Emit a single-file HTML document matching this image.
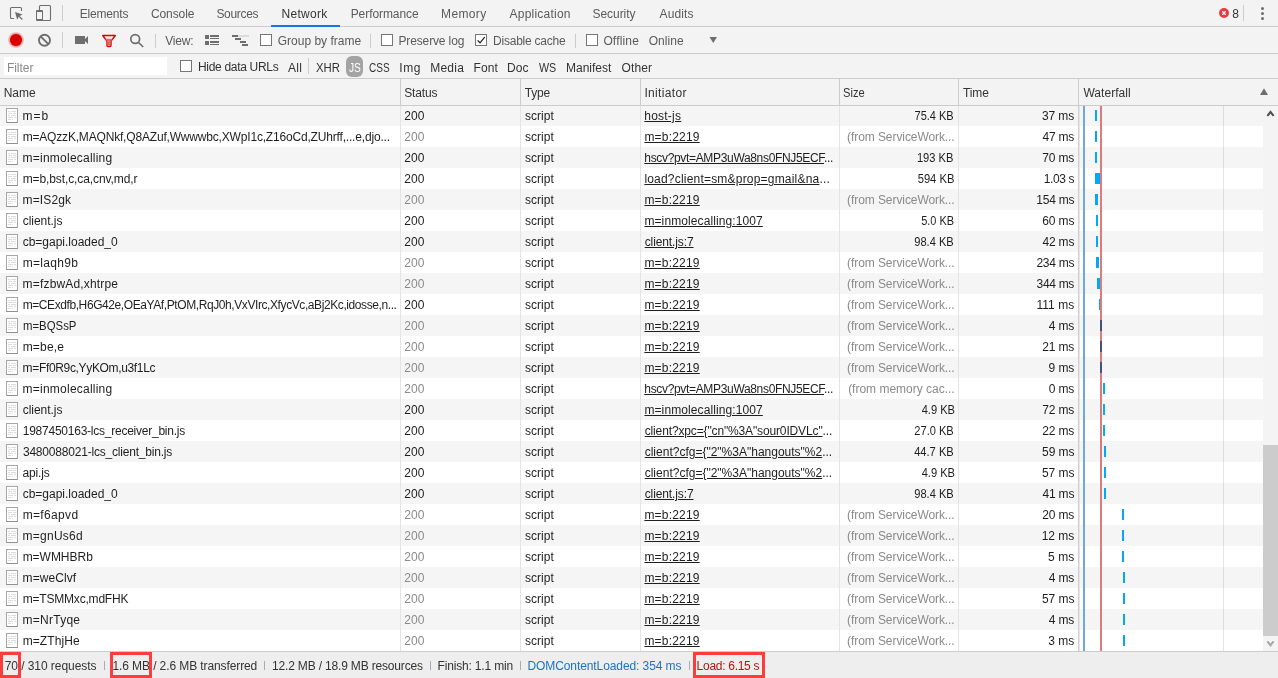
<!DOCTYPE html>
<html><head><meta charset="utf-8"><title>DevTools - Network</title>
<style>
*{box-sizing:border-box;margin:0;padding:0}
html,body{width:1278px;height:678px;overflow:hidden;background:#f3f3f3}
#tabs,#tb,#fb,#hd,#sb,#grid{will-change:transform}
body{font-family:"Liberation Sans",sans-serif;font-size:12px;color:#303942;position:relative}
.abs{position:absolute}
.tx{position:absolute;white-space:nowrap;line-height:14px}
#tabs{position:absolute;left:0;top:0;width:1278px;height:27px;background:#f3f3f3;border-bottom:1px solid #ccc}
#tabs .tx{top:7px;color:#5a5a5a}
#tabs .tx.sel{color:#333}
#tb{position:absolute;left:0;top:27px;width:1278px;height:27px;background:#f3f3f3;border-bottom:1px solid #ccc}
#tb .tx{top:7px;color:#5a5a5a}
#fb{position:absolute;left:0;top:54px;width:1278px;height:25px;background:#f3f3f3;border-bottom:1px solid #ccc}
#fb .tx{top:7px;color:#333}
.sep{position:absolute;width:1px;background:#ccc}
.cb{position:absolute;width:12px;height:12px;border:1px solid #767676;background:#fff}
#hd{position:absolute;left:0;top:79px;width:1278px;height:27px;background:#f3f3f3;border-bottom:1px solid #ccc}
#hd .tx{top:7px;color:#333}
#grid{position:absolute;left:0;top:105px;width:1263px;height:546px;background:#fff;overflow:hidden}
.r{position:relative;height:21px;width:1263px;background:#fff}
.r.o{background:#f5f5f5}
.c{position:absolute;top:1px;height:21px;line-height:21px;white-space:nowrap;color:#1e1e1e}
.c.g{color:#8a8a8a}
.in u{text-decoration:underline;text-underline-offset:1px}
.ic{position:absolute;left:6px;top:3px;width:12px;height:15px;border:1px solid #a6a6a6;border-bottom-color:#919191;background:#fff}
.ic:after{content:"";position:absolute;left:1px;top:2px;width:8px;height:9px;
background:linear-gradient(#fff,#fff) 2px 0/1px 1px no-repeat,linear-gradient(#fff,#fff) 4px 2px/1px 1px no-repeat,linear-gradient(#fff,#fff) 2px 4px/1px 1px no-repeat,linear-gradient(#fff,#fff) 5px 6px/1px 1px no-repeat,linear-gradient(#fff,#fff) 3px 8px/1px 1px no-repeat,linear-gradient(#fff,#fff) 5px 8px/3px 1px no-repeat,repeating-linear-gradient(#dcdcdc 0,#dcdcdc 1px,#fff 1px,#fff 2px)}
.bar{position:absolute;top:5px;height:11px;background:#03a9f4}
.bar.dk{background:#47507e;z-index:3}
.vl{position:absolute;width:1px;background:#ccc}
.vl.d{background:#e4e4e4}
#sb{position:absolute;left:0;top:651px;width:1278px;height:27px;background:#eee;border-top:1px solid #ccc}
#sb .tx{top:7px;color:#333}
.rb{position:absolute;top:652px;height:26px;border:3px solid #fc3d3d}
.ss{position:absolute;top:9px;width:1px;height:9px;background:#aaaab6}
</style></head><body>
<div id="tabs">
<span class="tx" style="letter-spacing:-0.18px;left:79.68px;">Elements</span>
<span class="tx" style="letter-spacing:-0.09px;left:150.95px;">Console</span>
<span class="tx" style="letter-spacing:-0.33px;left:216.44px;">Sources</span>
<span class="tx sel" style="letter-spacing:0.28px;left:281.59px;">Network</span>
<span class="tx" style="letter-spacing:-0.07px;left:350.68px;">Performance</span>
<span class="tx" style="letter-spacing:0.36px;left:441.05px;">Memory</span>
<span class="tx" style="letter-spacing:0.22px;left:509.58px;">Application</span>
<span class="tx" style="letter-spacing:-0.04px;left:592.44px;">Security</span>
<span class="tx" style="letter-spacing:0.12px;left:659.59px;">Audits</span>
<span class="tx" style="letter-spacing:3.08px;left:1232.35px;color:#333">8</span>
<div class="abs" style="left:271px;top:25px;width:69px;height:2px;background:#1a73e8"></div>
<div class="sep" style="left:62px;top:5px;height:16px"></div>
<div class="sep" style="left:1243px;top:5px;height:16px"></div>
<svg class="abs" style="left:0;top:0" width="70" height="27" viewBox="0 0 70 27">
<path d="M14 18.5H11.5a1 1 0 0 1-1-1V8.500a1 1 0 0 1 1-1H20.500a1 1 0 0 1 1 1V11" fill="none" stroke="#6e6e6e" stroke-width="1.1"/>
<path d="M15 12l7.600 2.400-3 1.500 3.200 3.200-.9.900-3.200-3.200-1.500 3z" fill="#6e6e6e"/>
<rect x="39.500" y="5.500" width="11" height="15" rx="1" fill="none" stroke="#6e6e6e" stroke-width="1.100"/>
<rect x="36" y="10" width="7" height="11" rx="1" fill="#6e6e6e"/>
<rect x="37" y="12" width="5" height="7" fill="#f3f3f3"/>
</svg>
<svg class="abs" style="left:1215px;top:4px" width="60" height="20" viewBox="0 0 60 20">
<circle cx="9" cy="9" r="5" fill="#eb3941"/>
<path d="M7.300 7.300l3.400 3.400M10.700 7.300l-3.400 3.400" stroke="#fff" stroke-width="1.300"/>
<circle cx="47.500" cy="4.500" r="1.500" fill="#6e6e6e"/><circle cx="47.500" cy="9.500" r="1.500" fill="#6e6e6e"/><circle cx="47.500" cy="14.500" r="1.500" fill="#6e6e6e"/>
</svg>
</div>
<div id="tb">
<svg class="abs" style="left:0;top:0" width="260" height="27" viewBox="0 0 260 27">
<defs><radialGradient id="rg"><stop offset="0.700" stop-color="#d80000" stop-opacity="0.450"/><stop offset="1" stop-color="#d80000" stop-opacity="0"/></radialGradient></defs>
<circle cx="16" cy="13" r="8.500" fill="url(#rg)"/>
<circle cx="16" cy="13" r="6" fill="#d80000"/>
<circle cx="44.500" cy="13.300" r="5.500" fill="none" stroke="#6e6e6e" stroke-width="1.900"/>
<path d="M40.600 9.400l7.800 7.800" stroke="#6e6e6e" stroke-width="1.900"/>
<path d="M75 9h10v3l3-3v8l-3-3v3H75z" fill="#6e6e6e"/>
<path d="M102.700 8.500h12.600l-4.300 5.700v4.300a1 1 0 0 1-1 1h-2a1 1 0 0 1-1-1v-4.300z" fill="none" stroke="#d80000" stroke-width="1.400" stroke-linejoin="round"/>
<path d="M105.200 11.800h7.600l-2.500 3.200v3.500h-2.600v-3.500z" fill="#e46a6a"/>
<circle cx="135.200" cy="12" r="4.400" fill="none" stroke="#6e6e6e" stroke-width="1.700"/>
<path d="M138.500 15.500l4.700 4.500" stroke="#6e6e6e" stroke-width="1.700"/>
<g fill="#6e6e6e">
<rect x="205" y="8" width="4" height="4"/><rect x="205" y="14" width="4" height="4"/>
<rect x="210" y="8" width="9" height="2"/><rect x="210" y="11" width="9" height="1"/>
<rect x="210" y="14" width="9" height="2"/><rect x="210" y="17" width="9" height="1"/>
<rect x="232" y="8" width="6" height="2"/><rect x="235" y="11" width="6" height="2"/>
<rect x="240" y="14" width="6" height="2"/><rect x="242" y="17" width="6" height="2"/>
</g>
<rect x="238" y="8" width="11" height="2" fill="#dcdcdc"/>
</svg>
<div class="sep" style="left:62px;top:5px;height:16px"></div>
<div class="sep" style="left:155px;top:7px;height:14px"></div>
<div class="sep" style="left:370px;top:7px;height:14px"></div>
<div class="sep" style="left:575px;top:7px;height:14px"></div>
<span class="tx" style="letter-spacing:-0.19px;left:165.17px;">View:</span>
<div class="cb" style="left:260px;top:7px"></div>
<span class="tx" style="left:277.72px;">Group by frame</span>
<div class="cb" style="left:381px;top:7px"></div>
<span class="tx" style="letter-spacing:-0.13px;left:398.45px;">Preserve log</span>
<div class="cb" style="left:475px;top:7px"><svg class="abs" style="left:0;top:0" width="10" height="10" viewBox="0 0 10 10"><path d="M1.600 5.400l2.400 2.400 4.700-5.600" fill="none" stroke="#222" stroke-width="1.300"/></svg></div>
<span class="tx" style="letter-spacing:-0.23px;left:493.05px;">Disable cache</span>
<div class="cb" style="left:586px;top:7px"></div>
<span class="tx" style="letter-spacing:0.16px;left:603.39px;">Offline</span>
<span class="tx" style="letter-spacing:0.07px;left:648.65px;">Online</span>
<svg class="abs" style="left:708px;top:9px" width="10" height="8" viewBox="0 0 10 8"><path d="M1.500 1h7.500l-3.750 6z" fill="#6e6e6e"/></svg>
</div>
<div id="fb">
<div class="abs" style="left:4px;top:3px;width:163px;height:18px;background:#fff"></div>
<span class="tx" style="letter-spacing:-0.04px;left:6.94px;color:#8a8a8a">Filter</span>
<div class="cb" style="left:180px;top:6px"></div>
<span class="tx" style="letter-spacing:-0.31px;left:198.02px;top:6px">Hide data URLs</span>
<span class="tx" style="letter-spacing:0.3px;left:287.92px;">All</span>
<div class="sep" style="left:308px;top:4px;height:16px"></div>
<span class="tx" style="transform:scaleX(0.9456);transform-origin:0 50%;left:316.34px;">XHR</span>
<div class="abs pill" style="left:346px;top:2px;width:17px;height:21px;border-radius:6px;background:#a3a3a3"></div>
<span class="tx js" style="transform:scaleX(0.8474);transform-origin:0 50%;left:348.96px;color:#fff">JS</span>
<span class="tx" style="transform:scaleX(0.8343);transform-origin:0 50%;left:369.46px;">CSS</span>
<span class="tx" style="letter-spacing:0.51px;left:399.34px;">Img</span>
<span class="tx" style="letter-spacing:0.23px;left:430.23px;">Media</span>
<span class="tx" style="letter-spacing:0.07px;left:473.59px;">Font</span>
<span class="tx" style="letter-spacing:0.06px;left:507.02px;">Doc</span>
<span class="tx" style="transform:scaleX(0.8890);transform-origin:0 50%;left:538.89px;">WS</span>
<span class="tx" style="letter-spacing:-0.02px;left:566.02px;">Manifest</span>
<span class="tx" style="letter-spacing:0.13px;left:621.56px;">Other</span>
</div>
<div id="hd">
<span class="tx" style="letter-spacing:-0.01px;left:3.68px;">Name</span>
<span class="tx" style="letter-spacing:-0.13px;left:404.23px;">Status</span>
<span class="tx" style="letter-spacing:-0.24px;left:524.85px;">Type</span>
<span class="tx" style="letter-spacing:0.34px;left:644.38px;">Initiator</span>
<span class="tx" style="transform:scaleX(0.9265);transform-origin:0 50%;left:843.48px;">Size</span>
<span class="tx" style="letter-spacing:-0.1px;left:962.94px;">Time</span>
<span class="tx" style="letter-spacing:0.04px;left:1083.41px;">Waterfall</span>
<svg class="abs" style="left:1259px;top:8px" width="10" height="9" viewBox="0 0 10 9"><path d="M1 7.900h8l-4-6.700z" fill="#6e6e6e"/></svg>
</div>
<div id="grid">
<div class="r o"><i class="ic"></i><span class="c n" style="letter-spacing:0.95px;left:22.62px;">m=b</span><span class="c s" style="letter-spacing:0.04px;left:404.34px;">200</span><span class="c t" style="letter-spacing:0.04px;left:524.93px;">script</span><span class="c in" style="letter-spacing:0.22px;left:644.32px;"><u>host-js</u></span><span class="c sz" style="transform:scaleX(0.9169);transform-origin:100% 50%;right:308.92px;">75.4 KB</span><span class="c tm" style="letter-spacing:-0.09px;right:188.86px;">37 ms</span><b class="bar" style="left:1095px;width:2px"></b></div>
<div class="r"><i class="ic"></i><span class="c n" style="letter-spacing:-0.18px;left:22.64px;">m=AQzzK,MAQNkf,Q8AZuf,Wwwwbc,XWpI1c,Z16oCd,ZUhrff,...e,djo...</span><span class="c s g" style="letter-spacing:0.04px;left:404.34px;">200</span><span class="c t" style="letter-spacing:0.04px;left:524.93px;">script</span><span class="c in" style="letter-spacing:0.2px;left:644.41px;"><u>m=b:2219</u></span><span class="c sz g" style="letter-spacing:-0.08px;right:308.39px;">(from ServiceWork...</span><span class="c tm" style="letter-spacing:-0.21px;right:188.85px;">47 ms</span><b class="bar" style="left:1095px;width:2px"></b></div>
<div class="r o"><i class="ic"></i><span class="c n" style="letter-spacing:0.23px;left:22.62px;">m=inmolecalling</span><span class="c s" style="letter-spacing:0.04px;left:404.34px;">200</span><span class="c t" style="letter-spacing:0.04px;left:524.93px;">script</span><span class="c in" style="letter-spacing:-0.33px;left:644.29px;"><u>hscv?pvt=AMP3uWa8ns0FNJ5ECF</u>...</span><span class="c sz" style="transform:scaleX(0.9269);transform-origin:100% 50%;right:309.21px;">193 KB</span><span class="c tm" style="letter-spacing:-0.13px;right:188.8px;">70 ms</span><b class="bar" style="left:1095px;width:2px"></b></div>
<div class="r"><i class="ic"></i><span class="c n" style="letter-spacing:-0.1px;left:22.64px;">m=b,bst,c,ca,cnv,md,r</span><span class="c s" style="letter-spacing:0.04px;left:404.34px;">200</span><span class="c t" style="letter-spacing:0.04px;left:524.93px;">script</span><span class="c in" style="letter-spacing:0.2px;left:644.39px;"><u>load?client=sm&amp;prop=gmail&amp;na</u>...</span><span class="c sz" style="transform:scaleX(0.9322);transform-origin:100% 50%;right:308.64px;">594 KB</span><span class="c tm" style="letter-spacing:-0.43px;right:189.03px;">1.03 s</span><b class="bar" style="left:1095px;width:5px"></b></div>
<div class="r o"><i class="ic"></i><span class="c n" style="letter-spacing:0.13px;left:22.62px;">m=IS2gk</span><span class="c s g" style="letter-spacing:0.04px;left:404.34px;">200</span><span class="c t" style="letter-spacing:0.04px;left:524.93px;">script</span><span class="c in" style="letter-spacing:0.2px;left:644.41px;"><u>m=b:2219</u></span><span class="c sz g" style="letter-spacing:-0.08px;right:308.39px;">(from ServiceWork...</span><span class="c tm" style="letter-spacing:-0.24px;right:188.81px;">154 ms</span><b class="bar" style="left:1095px;width:3px"></b></div>
<div class="r"><i class="ic"></i><span class="c n" style="letter-spacing:-0.04px;left:22.71px;">client.js</span><span class="c s" style="letter-spacing:0.04px;left:404.34px;">200</span><span class="c t" style="letter-spacing:0.04px;left:524.93px;">script</span><span class="c in" style="letter-spacing:0.1px;left:644.41px;"><u>m=inmolecalling:1007</u></span><span class="c sz" style="transform:scaleX(0.9097);transform-origin:100% 50%;right:309.05px;">5.0 KB</span><span class="c tm" style="letter-spacing:-0.12px;right:188.67px;">60 ms</span><b class="bar" style="left:1096px;width:2px"></b></div>
<div class="r o"><i class="ic"></i><span class="c n" style="letter-spacing:-0.01px;left:22.71px;">cb=gapi.loaded_0</span><span class="c s" style="letter-spacing:0.04px;left:404.34px;">200</span><span class="c t" style="letter-spacing:0.04px;left:524.93px;">script</span><span class="c in" style="letter-spacing:-0.11px;left:644.71px;"><u>client.js:7</u></span><span class="c sz" style="transform:scaleX(0.9237);transform-origin:100% 50%;right:309.09px;">98.4 KB</span><span class="c tm" style="letter-spacing:-0.2px;right:188.81px;">42 ms</span><b class="bar" style="left:1096px;width:2px"></b></div>
<div class="r"><i class="ic"></i><span class="c n" style="letter-spacing:0.34px;left:22.64px;">m=laqh9b</span><span class="c s g" style="letter-spacing:0.04px;left:404.34px;">200</span><span class="c t" style="letter-spacing:0.04px;left:524.93px;">script</span><span class="c in" style="letter-spacing:0.2px;left:644.41px;"><u>m=b:2219</u></span><span class="c sz g" style="letter-spacing:-0.08px;right:308.39px;">(from ServiceWork...</span><span class="c tm" style="letter-spacing:-0.27px;right:188.85px;">234 ms</span><b class="bar" style="left:1096px;width:3px"></b></div>
<div class="r o"><i class="ic"></i><span class="c n" style="letter-spacing:0.17px;left:22.62px;">m=fzbwAd,xhtrpe</span><span class="c s g" style="letter-spacing:0.04px;left:404.34px;">200</span><span class="c t" style="letter-spacing:0.04px;left:524.93px;">script</span><span class="c in" style="letter-spacing:0.2px;left:644.41px;"><u>m=b:2219</u></span><span class="c sz g" style="letter-spacing:-0.08px;right:308.39px;">(from ServiceWork...</span><span class="c tm" style="letter-spacing:-0.33px;right:189.04px;">344 ms</span><b class="bar" style="left:1097px;width:3px"></b></div>
<div class="r"><i class="ic"></i><span class="c n" style="letter-spacing:-0.41px;left:22.64px;">m=CExdfb,H6G42e,OEaYAf,PtOM,RqJ0h,VxVIrc,XfycVc,aBj2Kc,idosse,n...</span><span class="c s" style="letter-spacing:0.04px;left:404.34px;">200</span><span class="c t" style="letter-spacing:0.04px;left:524.93px;">script</span><span class="c in" style="letter-spacing:0.2px;left:644.41px;"><u>m=b:2219</u></span><span class="c sz g" style="letter-spacing:-0.08px;right:308.39px;">(from ServiceWork...</span><span class="c tm" style="letter-spacing:0.07px;right:188.63px;">111 ms</span><b class="bar" style="left:1099px;width:1px"></b></div>
<div class="r o"><i class="ic"></i><span class="c n" style="transform:scaleX(0.9483);transform-origin:0 50%;left:22.64px;">m=BQSsP</span><span class="c s g" style="letter-spacing:0.04px;left:404.34px;">200</span><span class="c t" style="letter-spacing:0.04px;left:524.93px;">script</span><span class="c in" style="letter-spacing:0.2px;left:644.41px;"><u>m=b:2219</u></span><span class="c sz g" style="letter-spacing:-0.08px;right:308.39px;">(from ServiceWork...</span><span class="c tm" style="letter-spacing:-0.16px;right:188.8px;">4 ms</span><b class="bar dk" style="left:1100px;width:2px"></b></div>
<div class="r"><i class="ic"></i><span class="c n" style="letter-spacing:0.2px;left:22.64px;">m=be,e</span><span class="c s g" style="letter-spacing:0.04px;left:404.34px;">200</span><span class="c t" style="letter-spacing:0.04px;left:524.93px;">script</span><span class="c in" style="letter-spacing:0.2px;left:644.41px;"><u>m=b:2219</u></span><span class="c sz g" style="letter-spacing:-0.08px;right:308.39px;">(from ServiceWork...</span><span class="c tm" style="letter-spacing:-0.15px;right:188.85px;">21 ms</span><b class="bar dk" style="left:1100px;width:2px"></b></div>
<div class="r o"><i class="ic"></i><span class="c n" style="letter-spacing:-0.34px;left:22.62px;">m=Ff0R9c,YyKOm,u3f1Lc</span><span class="c s g" style="letter-spacing:0.04px;left:404.34px;">200</span><span class="c t" style="letter-spacing:0.04px;left:524.93px;">script</span><span class="c in" style="letter-spacing:0.2px;left:644.41px;"><u>m=b:2219</u></span><span class="c sz g" style="letter-spacing:-0.08px;right:308.39px;">(from ServiceWork...</span><span class="c tm" style="letter-spacing:-0.04px;right:188.7px;">9 ms</span><b class="bar dk" style="left:1100px;width:2px"></b></div>
<div class="r"><i class="ic"></i><span class="c n" style="letter-spacing:0.23px;left:22.62px;">m=inmolecalling</span><span class="c s g" style="letter-spacing:0.04px;left:404.34px;">200</span><span class="c t" style="letter-spacing:0.04px;left:524.93px;">script</span><span class="c in" style="letter-spacing:-0.33px;left:644.29px;"><u>hscv?pvt=AMP3uWa8ns0FNJ5ECF</u>...</span><span class="c sz g" style="letter-spacing:-0.01px;right:308.39px;">(from memory cac...</span><span class="c tm" style="letter-spacing:-0.12px;right:188.78px;">0 ms</span><b class="bar" style="left:1103px;width:2px"></b></div>
<div class="r o"><i class="ic"></i><span class="c n" style="letter-spacing:-0.04px;left:22.71px;">client.js</span><span class="c s" style="letter-spacing:0.04px;left:404.34px;">200</span><span class="c t" style="letter-spacing:0.04px;left:524.93px;">script</span><span class="c in" style="letter-spacing:0.1px;left:644.41px;"><u>m=inmolecalling:1007</u></span><span class="c sz" style="transform:scaleX(0.9268);transform-origin:100% 50%;right:308.24px;">4.9 KB</span><span class="c tm" style="letter-spacing:-0.13px;right:188.8px;">72 ms</span><b class="bar" style="left:1103px;width:2px"></b></div>
<div class="r"><i class="ic"></i><span class="c n" style="letter-spacing:-0.24px;left:22.75px;">1987450163-lcs_receiver_bin.js</span><span class="c s" style="letter-spacing:0.04px;left:404.34px;">200</span><span class="c t" style="letter-spacing:0.04px;left:524.93px;">script</span><span class="c in" style="letter-spacing:-0.14px;left:644.71px;"><u>client?xpc={&quot;cn&quot;%3A&quot;sour0IDVLc&quot;</u>...</span><span class="c sz" style="transform:scaleX(0.9224);transform-origin:100% 50%;right:309.1px;">27.0 KB</span><span class="c tm" style="letter-spacing:-0.15px;right:188.85px;">22 ms</span><b class="bar" style="left:1103px;width:2px"></b></div>
<div class="r o"><i class="ic"></i><span class="c n" style="letter-spacing:-0.2px;left:22.92px;">3480088021-lcs_client_bin.js</span><span class="c s" style="letter-spacing:0.04px;left:404.34px;">200</span><span class="c t" style="letter-spacing:0.04px;left:524.93px;">script</span><span class="c in" style="left:644.71px;"><u>client?cfg={&quot;2&quot;%3A&quot;hangouts&quot;%2</u>...</span><span class="c sz" style="transform:scaleX(0.9259);transform-origin:100% 50%;right:309.14px;">44.7 KB</span><span class="c tm" style="letter-spacing:-0.07px;right:188.63px;">59 ms</span><b class="bar" style="left:1104px;width:2px"></b></div>
<div class="r"><i class="ic"></i><span class="c n" style="letter-spacing:-0.15px;left:22.5px;">api.js</span><span class="c s" style="letter-spacing:0.04px;left:404.34px;">200</span><span class="c t" style="letter-spacing:0.04px;left:524.93px;">script</span><span class="c in" style="left:644.71px;"><u>client?cfg={&quot;2&quot;%3A&quot;hangouts&quot;%2</u>...</span><span class="c sz" style="transform:scaleX(0.9268);transform-origin:100% 50%;right:308.24px;">4.9 KB</span><span class="c tm" style="letter-spacing:-0.07px;right:188.67px;">57 ms</span><b class="bar" style="left:1104px;width:2px"></b></div>
<div class="r o"><i class="ic"></i><span class="c n" style="letter-spacing:-0.01px;left:22.71px;">cb=gapi.loaded_0</span><span class="c s" style="letter-spacing:0.04px;left:404.34px;">200</span><span class="c t" style="letter-spacing:0.04px;left:524.93px;">script</span><span class="c in" style="letter-spacing:-0.11px;left:644.71px;"><u>client.js:7</u></span><span class="c sz" style="transform:scaleX(0.9237);transform-origin:100% 50%;right:309.09px;">98.4 KB</span><span class="c tm" style="letter-spacing:-0.2px;right:188.81px;">41 ms</span><b class="bar" style="left:1104px;width:2px"></b></div>
<div class="r"><i class="ic"></i><span class="c n" style="letter-spacing:0.35px;left:22.64px;">m=f6apvd</span><span class="c s g" style="letter-spacing:0.04px;left:404.34px;">200</span><span class="c t" style="letter-spacing:0.04px;left:524.93px;">script</span><span class="c in" style="letter-spacing:0.2px;left:644.41px;"><u>m=b:2219</u></span><span class="c sz g" style="letter-spacing:-0.08px;right:308.39px;">(from ServiceWork...</span><span class="c tm" style="letter-spacing:-0.15px;right:188.85px;">20 ms</span><b class="bar" style="left:1122px;width:2px"></b></div>
<div class="r o"><i class="ic"></i><span class="c n" style="letter-spacing:0.23px;left:22.62px;">m=gnUs6d</span><span class="c s g" style="letter-spacing:0.04px;left:404.34px;">200</span><span class="c t" style="letter-spacing:0.04px;left:524.93px;">script</span><span class="c in" style="letter-spacing:0.2px;left:644.41px;"><u>m=b:2219</u></span><span class="c sz g" style="letter-spacing:-0.08px;right:308.39px;">(from ServiceWork...</span><span class="c tm" style="letter-spacing:-0.03px;right:188.8px;">12 ms</span><b class="bar" style="left:1122px;width:2px"></b></div>
<div class="r"><i class="ic"></i><span class="c n" style="letter-spacing:-0.02px;left:22.64px;">m=WMHBRb</span><span class="c s g" style="letter-spacing:0.04px;left:404.34px;">200</span><span class="c t" style="letter-spacing:0.04px;left:524.93px;">script</span><span class="c in" style="letter-spacing:0.2px;left:644.41px;"><u>m=b:2219</u></span><span class="c sz g" style="letter-spacing:-0.08px;right:308.39px;">(from ServiceWork...</span><span class="c tm" style="letter-spacing:0.06px;right:188.67px;">5 ms</span><b class="bar" style="left:1122px;width:2px"></b></div>
<div class="r o"><i class="ic"></i><span class="c n" style="letter-spacing:0.07px;left:22.62px;">m=weClvf</span><span class="c s g" style="letter-spacing:0.04px;left:404.34px;">200</span><span class="c t" style="letter-spacing:0.04px;left:524.93px;">script</span><span class="c in" style="letter-spacing:0.2px;left:644.41px;"><u>m=b:2219</u></span><span class="c sz g" style="letter-spacing:-0.08px;right:308.39px;">(from ServiceWork...</span><span class="c tm" style="letter-spacing:-0.16px;right:188.8px;">4 ms</span><b class="bar" style="left:1123px;width:2px"></b></div>
<div class="r"><i class="ic"></i><span class="c n" style="letter-spacing:-0.19px;left:22.64px;">m=TSMMxc,mdFHK</span><span class="c s g" style="letter-spacing:0.04px;left:404.34px;">200</span><span class="c t" style="letter-spacing:0.04px;left:524.93px;">script</span><span class="c in" style="letter-spacing:0.2px;left:644.41px;"><u>m=b:2219</u></span><span class="c sz g" style="letter-spacing:-0.08px;right:308.39px;">(from ServiceWork...</span><span class="c tm" style="letter-spacing:-0.07px;right:188.67px;">57 ms</span><b class="bar" style="left:1123px;width:2px"></b></div>
<div class="r o"><i class="ic"></i><span class="c n" style="letter-spacing:0.24px;left:22.62px;">m=NrTyqe</span><span class="c s g" style="letter-spacing:0.04px;left:404.34px;">200</span><span class="c t" style="letter-spacing:0.04px;left:524.93px;">script</span><span class="c in" style="letter-spacing:0.2px;left:644.41px;"><u>m=b:2219</u></span><span class="c sz g" style="letter-spacing:-0.08px;right:308.39px;">(from ServiceWork...</span><span class="c tm" style="letter-spacing:-0.16px;right:188.8px;">4 ms</span><b class="bar" style="left:1123px;width:2px"></b></div>
<div class="r"><i class="ic"></i><span class="c n" style="letter-spacing:0.1px;left:22.64px;">m=ZThjHe</span><span class="c s g" style="letter-spacing:0.04px;left:404.34px;">200</span><span class="c t" style="letter-spacing:0.04px;left:524.93px;">script</span><span class="c in" style="letter-spacing:0.2px;left:644.41px;"><u>m=b:2219</u></span><span class="c sz g" style="letter-spacing:-0.08px;right:308.39px;">(from ServiceWork...</span><span class="c tm" style="letter-spacing:0.04px;right:188.6px;">3 ms</span><b class="bar" style="left:1123px;width:2px"></b></div>
<div class="vl" style="left:1223px;top:1px;height:545px;background:rgba(0,0,0,.1)"></div>
<div class="abs" style="left:1083px;top:1px;width:2px;height:545px;background:#70a7df"></div>
<div class="abs" style="left:1100px;top:1px;width:2px;height:545px;background:#db7b7b;z-index:2"></div>
</div>
<div class="abs" style="left:1263px;top:106px;width:15px;height:545px;background:#f4f4f4"></div>
<div class="abs" style="left:1263px;top:445px;width:15px;height:191px;background:#ccc"></div>
<svg class="abs" style="left:1263px;top:106px" width="15" height="15" viewBox="0 0 15 15"><path d="M4.400 9.800l3.100-3.800 3.100 3.800" fill="none" stroke="#505050" stroke-width="2.100"/></svg>
<svg class="abs" style="left:1263px;top:636px" width="15" height="15" viewBox="0 0 15 15"><path d="M4.400 5.300l3.100 3.900 3.100-3.900" fill="none" stroke="#a9a9a9" stroke-width="2.100"/></svg>
<div class="vl" style="left:400px;top:79px;height:26px"></div><div class="vl d" style="left:400px;top:106px;height:545px"></div>
<div class="vl" style="left:520px;top:79px;height:26px"></div><div class="vl d" style="left:520px;top:106px;height:545px"></div>
<div class="vl" style="left:640px;top:79px;height:26px"></div><div class="vl d" style="left:640px;top:106px;height:545px"></div>
<div class="vl" style="left:839px;top:79px;height:26px"></div><div class="vl d" style="left:839px;top:106px;height:545px"></div>
<div class="vl" style="left:958px;top:79px;height:26px"></div><div class="vl d" style="left:958px;top:106px;height:545px"></div>
<div class="vl" style="left:1078px;top:79px;height:26px"></div><div class="vl" style="left:1078px;top:106px;height:545px;background:#cfcfcf"></div><div class="vl" style="left:1079px;top:106px;height:545px;background:#e6e6e6"></div>
<div class="abs" style="left:0;top:105px;width:1278px;height:1px;background:#ccc;z-index:4"></div>
<div id="sb">
<span class="tx" style="letter-spacing:-0.06px;left:4.7px;">70 / 310 requests</span>
<i class="ss" style="left:104px"></i>
<span class="tx" style="letter-spacing:-0.1px;left:112.5px;">1.6 MB / 2.6 MB transferred</span>
<i class="ss" style="left:264px"></i>
<span class="tx" style="letter-spacing:-0.17px;left:272px;">12.2 MB / 18.9 MB resources</span>
<i class="ss" style="left:430px"></i>
<span class="tx" style="letter-spacing:-0.17px;left:437.53px;">Finish: 1.1 min</span>
<i class="ss" style="left:520px"></i>
<span class="tx" style="letter-spacing:-0.09px;left:527.48px;color:#1a73c8">DOMContentLoaded: 354 ms</span>
<i class="ss" style="left:689px"></i>
<span class="tx" style="letter-spacing:-0.28px;left:696.6px;color:#b31412">Load: 6.15 s</span>
</div>
<div class="rb" style="left:0;width:21px"></div>
<div class="rb" style="left:110px;width:42px"></div>
<div class="rb" style="left:693px;width:72px"></div>
</body></html>
